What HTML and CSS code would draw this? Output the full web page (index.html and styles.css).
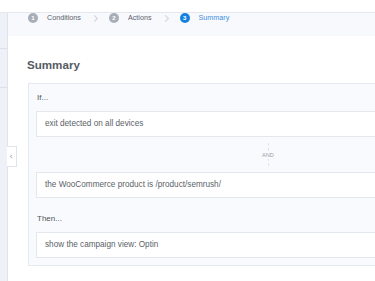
FILE: index.html
```html
<!DOCTYPE html>
<html lang="en">
<head>
  <meta charset="UTF-8" />
  <meta name="viewport" content="width=device-width, initial-scale=1.0" />
  <title>Summary</title>
  <link rel="stylesheet" href="styles.css">
</head>
<body>
  <div class="topbar"></div>
  <div class="layout">
    <div class="sidebar">
      <div class="side-item"></div>
      <div class="side-item"></div>
      <button class="collapse">&#8249;</button>
    </div>
    <div class="main">
      <div class="steps">
        <span class="step-num">1</span><span class="step-label">Conditions</span>
        <span class="step-sep"></span>
        <span class="step-num">2</span><span class="step-label">Actions</span>
        <span class="step-sep"></span>
        <span class="step-num active">3</span><span class="step-label active">Summary</span>
      </div>
      <div class="content">
        <h2>Summary</h2>
        <div class="card">
          <div class="label first">If...</div>
          <div class="rule">exit detected on all devices</div>
          <div class="and"><span>AND</span></div>
          <div class="rule">the WooCommerce product is /product/semrush/</div>
          <div class="label">Then...</div>
          <div class="rule">show the campaign view: Optin</div>
        </div>
      </div>
    </div>
  </div>
</body>
</html>
```

FILE: styles.css
```css
body {
  margin: 0;
  font-family: "Liberation Sans", Arial, sans-serif;
  background: #fff;
  color: #555;
  overflow: hidden;
  height: 281px;
}
.topbar {
  height: 12px;
  border-bottom: 1px solid #e3e7ee;
}
.layout {
  display: flex;
  height: 268px;
}
.sidebar {
  position: relative;
  width: 7px;
  flex-shrink: 0;
  background: #eef2f8;
  border-right: 1px solid #dfe4ec;
}
.side-item {
  height: 35px;
  border-bottom: 1px solid #dbe1ea;
}
.side-item + .side-item {
  height: 38px;
}
.collapse {
  position: absolute;
  left: 7px;
  top: 133px;
  width: 10px;
  height: 21px;
  padding: 0 1px 0 0;
  background: #fff;
  border: 1px solid #e0e4eb;
  border-left: none;
  color: #9aa1ad;
  font-family: "DejaVu Sans", sans-serif;
  font-size: 9px;
  line-height: 19px;
  text-align: center;
  z-index: 2;
}
.main {
  flex: 1;
  min-width: 0;
  overflow: hidden;
}
.steps {
  height: 23px;
  background: #f8f9fc;
  display: flex;
  align-items: flex-start;
  padding: 0 0 0 20px;
  font-size: 7.2px;
  line-height: 10px;
}
.step-num {
  width: 10px;
  height: 10px;
  border-radius: 50%;
  background: #a8aeb8;
  color: #fff;
  font-size: 6px;
  font-weight: bold;
  text-align: center;
  line-height: 10px;
  flex-shrink: 0;
}
.step-num.active {
  background: #1682e0;
}
.step-label {
  margin-left: 9px;
  color: #5c626b;
}
.step-label.active {
  color: #3d8fe0;
}
.step-sep {
  width: 4px;
  height: 4px;
  margin: 3px 12px 0 11px;
  border-top: 1px solid #cfd3da;
  border-right: 1px solid #cfd3da;
  transform: rotate(45deg);
}
.content {
  padding: 0 0 0 20px;
}
h2 {
  margin: 22px 0 11px -1px;
  font-size: 11.6px;
  line-height: 14px;
  font-weight: bold;
  color: #555b63;
}
.card {
  width: 464px;
  padding: 0 7px 7px;
  background: #f9fafd;
  border: 1px solid #e5e9f0;
}
.label {
  font-size: 8px;
  line-height: 10px;
  color: #50555c;
  padding: 16px 0 8px 1px;
}
.label.first {
  padding-top: 9px;
}
.rule {
  background: #fff;
  border: 1px solid #e3e7ee;
  height: 24px;
  line-height: 24px;
  padding: 0 8px;
  font-size: 8.2px;
  color: #5a5f66;
  white-space: nowrap;
}
.and {
  height: 35px;
  display: flex;
  align-items: center;
  justify-content: center;
  position: relative;
}
.and::before {
  content: "";
  position: absolute;
  top: 6px;
  bottom: 6px;
  left: 50%;
  border-left: 1px dashed #dfe3ea;
}
.and span {
  position: relative;
  background: #f9fafd;
  font-size: 5.6px;
  color: #9a9fa8;
  line-height: 8px;
  padding: 0 1px;
}
```
